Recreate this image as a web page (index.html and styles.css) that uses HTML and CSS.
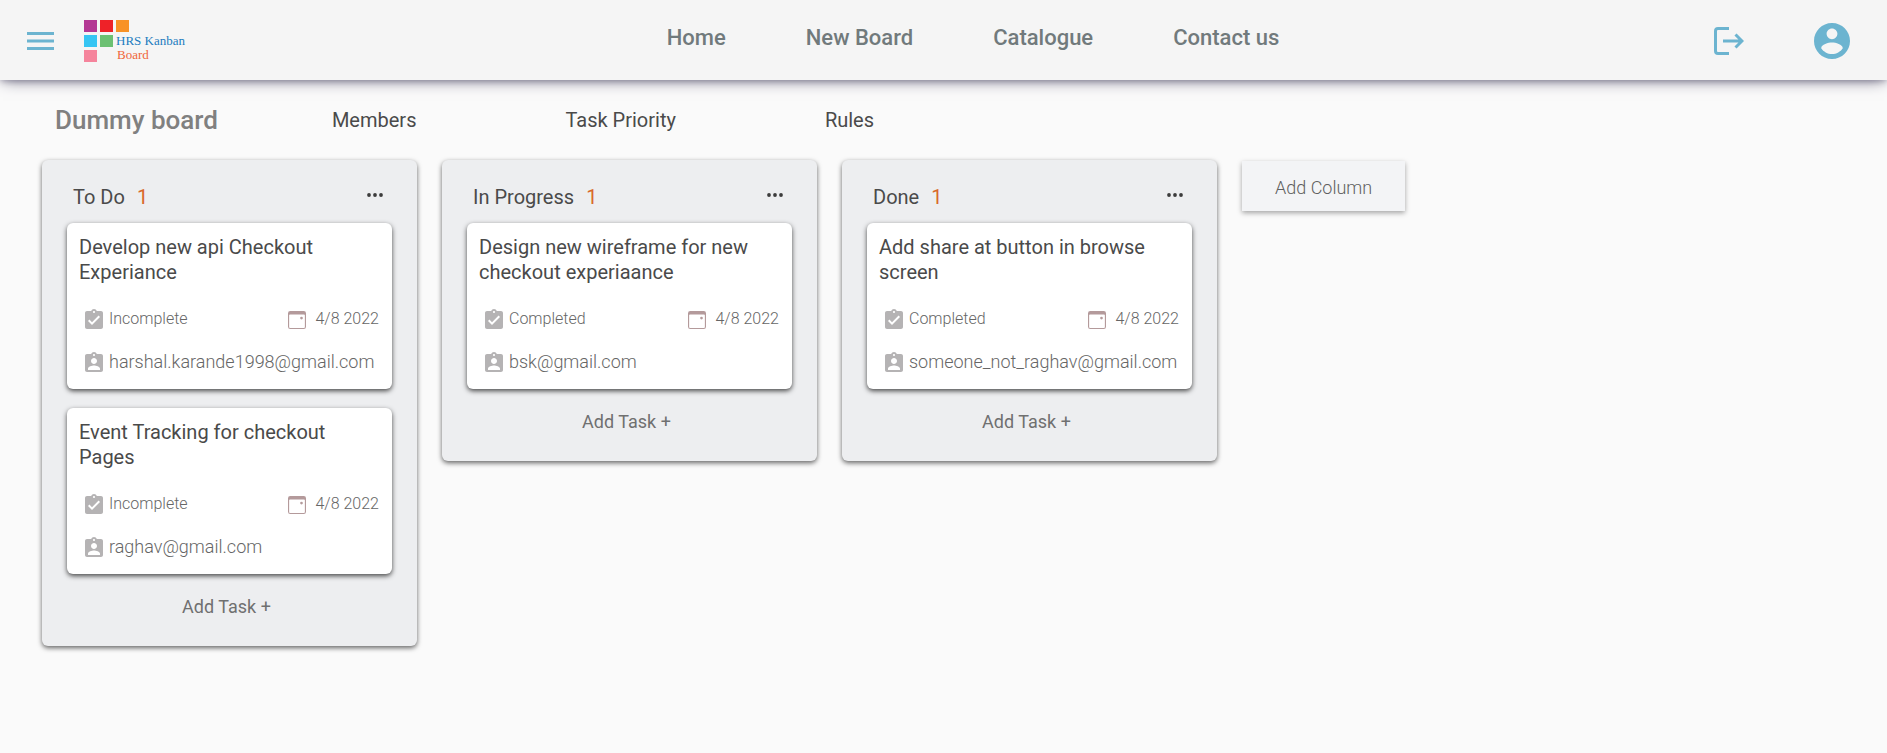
FILE: index.html
```html
<!DOCTYPE html>
<html lang="en">
<head>
<meta charset="utf-8">
<title>HRS Kanban Board</title>
<link rel="stylesheet" href="styles.css">
</head>
<body>
<svg class="sprite" aria-hidden="true">
  <symbol id="task" viewBox="3 1 18 20"><path d="M19 3h-4.2C14.4 1.800 13.300 1 12 1s-2.400.8-2.800 2H5c-1.100 0-2 .9-2 2v14c0 1.100.9 2 2 2h14c1.100 0 2-.9 2-2V5c0-1.100-.9-2-2-2zm-7 0c.55 0 1 .45 1 1s-.45 1-1 1-1-.45-1-1 .45-1 1-1zm-2 14l-4-4 1.410-1.410L10 14.170l6.590-6.590L18 9l-8 8z"/></symbol>
  <symbol id="person" viewBox="3 1 18 20"><path d="M19 3h-4.180C14.400 1.840 13.300 1 12 1s-2.400.84-2.820 2H5c-1.100 0-2 .9-2 2v14c0 1.100.9 2 2 2h14c1.100 0 2-.9 2-2V5c0-1.100-.9-2-2-2zm-7 0c.55 0 1 .45 1 1s-.45 1-1 1-1-.45-1-1 .45-1 1-1zm0 4c1.660 0 3 1.340 3 3s-1.340 3-3 3-3-1.340-3-3 1.340-3 3-3zm6 12H6v-1.400c0-2 4-3.100 6-3.100s6 1.100 6 3.100V19z"/></symbol>
  <symbol id="date" viewBox="0 0 16 16"><path d="M14 0H2a2 2 0 0 0-2 2v12a2 2 0 0 0 2 2h12a2 2 0 0 0 2-2V2a2 2 0 0 0-2-2zM1 3.857C1 3.384 1.448 3 2 3h12c.552 0 1 .384 1 .857v10.286c0 .473-.448.857-1 .857H2c-.552 0-1-.384-1-.857V3.857z"/><circle cx="12" cy="6.300" r="1.200"/></symbol>
  <symbol id="dots" viewBox="0 0 16 4"><circle cx="2" cy="2" r="1.900"/><circle cx="8" cy="2" r="1.900"/><circle cx="14" cy="2" r="1.900"/></symbol>
</svg>

<header class="topbar">
  <div class="brand">
    <button class="icon-button" aria-label="Menu"><svg width="27" height="18" viewBox="3 6 18 12"><path d="M3 18h18v-2H3v2zm0-5h18v-2H3v2zm0-7v2h18V6H3z"/></svg></button>
    <svg class="logo" width="148" height="42" viewBox="0 0 148 42" role="img" aria-label="HRS Kanban Board">
      <rect x="0" y="0" width="13" height="12" fill="#b43894"/>
      <rect x="16" y="0" width="13" height="12" fill="#ee2228"/>
      <rect x="32" y="0" width="13" height="12" fill="#f89226"/>
      <rect x="0" y="15" width="13" height="12" fill="#36c5f3"/>
      <rect x="16" y="15" width="13" height="12" fill="#6cc072"/>
      <rect x="0" y="30" width="13" height="12" fill="#f5849c"/>
      <text class="logo-name" x="32" y="25">HRS Kanban</text>
      <text class="logo-sub" x="33" y="39">Board</text>
    </svg>
  </div>
  <nav class="main-nav">
    <a href="#">Home</a>
    <a href="#">New Board</a>
    <a href="#">Catalogue</a>
    <a href="#">Contact us</a>
  </nav>
  <div class="account">
    <button class="icon-button" aria-label="Log out"><svg width="30" height="28" viewBox="0 0 30 28" fill="none"><path class="stroke" d="M15 1.500H4Q1.500 1.500 1.500 4V24Q1.500 26.500 4 26.500H15M9 14H28M21.500 7.500 28 14 21.500 20.500"/></svg></button>
    <button class="icon-button" aria-label="Account"><svg width="36" height="36" viewBox="2 2 20 20"><path d="M12 2C6.480 2 2 6.480 2 12s4.480 10 10 10 10-4.480 10-10S17.520 2 12 2zm0 3c1.660 0 3 1.340 3 3s-1.340 3-3 3-3-1.340-3-3 1.340-3 3-3zm0 14.200c-2.500 0-4.710-1.280-6-3.220.03-1.990 4-3.080 6-3.080 1.990 0 5.970 1.090 6 3.080-1.290 1.940-3.500 3.220-6 3.220z"/></svg></button>
  </div>
</header>

<main>
  <div class="board-bar">
    <h1>Dummy board</h1>
    <div class="board-menu">
      <button>Members</button>
      <button>Task Priority</button>
      <button>Rules</button>
    </div>
  </div>

  <div class="board">
    <section class="column">
      <header class="column-head">
        <h2>To Do</h2><span class="count">1</span>
        <button class="more" aria-label="Column options"><svg width="16" height="4"><use href="#dots"/></svg></button>
      </header>
      <div class="cards">
        <article class="card">
          <h3>Develop new api Checkout Experiance</h3>
          <div class="meta"><svg class="icon"><use href="#task"/></svg><span>Incomplete</span><svg class="icon-date"><use href="#date"/></svg><time>4/8 2022</time></div>
          <div class="owner"><svg class="icon"><use href="#person"/></svg><span>harshal.karande1998@gmail.com</span></div>
        </article>
        <article class="card">
          <h3>Event Tracking for checkout Pages</h3>
          <div class="meta"><svg class="icon"><use href="#task"/></svg><span>Incomplete</span><svg class="icon-date"><use href="#date"/></svg><time>4/8 2022</time></div>
          <div class="owner"><svg class="icon"><use href="#person"/></svg><span>raghav@gmail.com</span></div>
        </article>
      </div>
      <button class="add-task">Add Task +</button>
    </section>

    <section class="column">
      <header class="column-head">
        <h2>In Progress</h2><span class="count">1</span>
        <button class="more" aria-label="Column options"><svg width="16" height="4"><use href="#dots"/></svg></button>
      </header>
      <div class="cards">
        <article class="card">
          <h3>Design new wireframe for new checkout experiaance</h3>
          <div class="meta"><svg class="icon"><use href="#task"/></svg><span>Completed</span><svg class="icon-date"><use href="#date"/></svg><time>4/8 2022</time></div>
          <div class="owner"><svg class="icon"><use href="#person"/></svg><span>bsk@gmail.com</span></div>
        </article>
      </div>
      <button class="add-task">Add Task +</button>
    </section>

    <section class="column">
      <header class="column-head">
        <h2>Done</h2><span class="count">1</span>
        <button class="more" aria-label="Column options"><svg width="16" height="4"><use href="#dots"/></svg></button>
      </header>
      <div class="cards">
        <article class="card">
          <h3>Add share at button in browse screen</h3>
          <div class="meta"><svg class="icon"><use href="#task"/></svg><span>Completed</span><svg class="icon-date"><use href="#date"/></svg><time>4/8 2022</time></div>
          <div class="owner"><svg class="icon"><use href="#person"/></svg><span>someone_not_raghav@gmail.com</span></div>
        </article>
      </div>
      <button class="add-task">Add Task +</button>
    </section>

    <button class="add-column">Add Column</button>
  </div>
</main>
</body>
</html>
```
FILE: styles.css
```css
* { box-sizing: border-box; }

body {
  margin: 0;
  background: #fafafa;
  color: #4a4a4a;
  font-family: Roboto, sans-serif;
  font-size: 20px;
}

h1, h2, h3 { margin: 0; font-weight: 400; }

button {
  border: 0;
  padding: 0;
  background: none;
  color: inherit;
  font: inherit;
  cursor: pointer;
}

svg { display: block; flex: none; }
.sprite { position: absolute; width: 0; height: 0; }

.topbar {
  display: flex;
  justify-content: space-between;
  align-items: center;
  height: 80px;
  padding: 2px 37px 0 27px;
  background: #f5f5f5;
  box-shadow: 0 2px 15px -3px #5a5570, 0 2px 6px -1px #5a557066;
}

.brand { display: flex; align-items: center; gap: 30px; }
.icon-button { fill: #6cb4d0; }
.stroke { fill: none; stroke: #6cb4d0; stroke-width: 3; }

.logo-name, .logo-sub { font-family: "Liberation Serif", serif; font-size: 13px; }
.logo-name { fill: #1c7cc0; }
.logo-sub { fill: #f0653a; }

.main-nav { display: flex; gap: 80px; padding-bottom: 8px; }
.main-nav a {
  color: #717a7c;
  font-size: 22px;
  font-weight: 500;
  text-decoration: none;
}

.account { display: flex; align-items: center; gap: 70px; }

.board-bar {
  display: flex;
  align-items: center;
  gap: 114px;
  height: 80px;
  padding: 0 55px;
}
.board-bar h1 { color: #808080; font-size: 26px; font-weight: 500; }
.board-menu { display: flex; gap: 149px; }

.board {
  display: flex;
  align-items: flex-start;
  gap: 25px;
  padding: 0 42px 42px;
}

.column {
  width: 375px;
  padding: 18px 25px 27px;
  border-radius: 6px;
  background: #edeef0;
  box-shadow: 0 2px 5px rgba(0, 0, 0, .6);
}

.column-head {
  display: flex;
  align-items: center;
  gap: 12px;
  height: 38px;
  padding: 0 9px 0 6px;
}
.column-head h2 { font-size: 20px; }
.count { color: #d9692a; }
.more { margin-left: auto; padding-bottom: 4px; fill: #3c3c3c; }

.cards { display: grid; gap: 19px; margin-top: 7px; }

.card {
  min-height: 166px;
  padding: 12px;
  border-radius: 6px;
  background: #fff;
  box-shadow: 0 2px 5px rgba(0, 0, 0, .7);
}
.card h3 { font-size: 20px; line-height: 25px; }

.meta, .owner {
  display: flex;
  align-items: center;
  padding: 0 1px 0 6px;
  color: #666;
  font-weight: 300;
}
.meta { margin-top: 21px; font-size: 16px; line-height: 26px; }
.owner { margin-top: 17px; font-size: 18px; line-height: 26px; }
.icon { width: 18px; height: 20px; margin-right: 6px; fill: #b5b3b4; }
.icon-date { width: 18px; height: 18px; margin: 2px 9px 0 auto; fill: #b49a9b; }

.add-task {
  display: block;
  margin: 19px auto 0;
  padding-right: 6px;
  height: 26px;
  color: #707070;
  font-size: 18px;
}

.add-column {
  height: 50px;
  margin-top: 1px;
  padding: 2px 33px 0;
  background: #f3f4f6;
  color: #606060;
  font-size: 18px;
  font-weight: 300;
  box-shadow: 0 2px 5px rgba(0, 0, 0, .35);
}
```
